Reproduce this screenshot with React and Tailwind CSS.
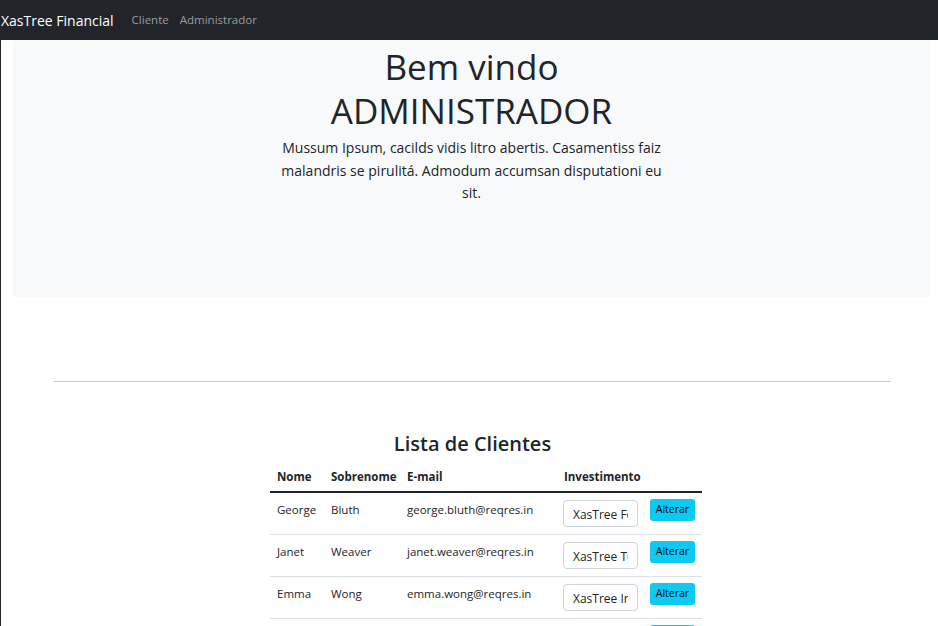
import React from "react";

const clientes = [
  { nome: "George", sobrenome: "Bluth", email: "george.bluth@reqres.in", investimento: "XasTree Fortune" },
  { nome: "Janet", sobrenome: "Weaver", email: "janet.weaver@reqres.in", investimento: "XasTree Tech" },
  { nome: "Emma", sobrenome: "Wong", email: "emma.wong@reqres.in", investimento: "XasTree Invest" },
  { nome: "Eve", sobrenome: "Holt", email: "eve.holt@reqres.in", investimento: "XasTree Fortune" },
];

const Navbar = () => (
  <nav className="h-10 bg-[#212529] flex items-center">
    <span className="text-[14px] text-white mr-[18px]">XasTree Financial</span>
    <a className="text-[11.5px] text-[#9a9c9e] mr-[11px]">Cliente</a>
    <a className="text-[11.5px] text-[#9a9c9e]">Administrador</a>
  </nav>
);

const App = () => {
  return (
    <div
      className="min-h-screen bg-white border-l border-[#212529] text-[#212529]"
      style={{ fontFamily: '"Open Sans", "Noto Sans", sans-serif' }}
    >
      <Navbar />

      <div className="ml-3 mr-2 bg-[#f8f9fa] h-[257px] flex flex-col items-center pt-[5px]">
        <h1 className="text-[35px] leading-[44px] text-center font-normal">
          Bem vindo
          <br />
          ADMINISTRADOR
        </h1>
        <p className="w-[400px] text-center text-[14px] leading-[22.5px] mt-[4px]">
          Mussum Ipsum, cacilds vidis litro abertis. Casamentiss faiz malandris se pirulitá. Admodum accumsan
          disputationi eu sit.
        </p>
      </div>

      <div className="pt-[84px] pl-[53px] pr-[47px]">
        <hr className="border-0 border-t border-[#c4c5c6]" />
      </div>

      <div className="pt-[48px]">
        <h3 className="text-[20px] font-semibold leading-[28px] text-center pl-[6px]">Lista de Clientes</h3>
        <table className="table-fixed w-[432px] ml-[269px] mt-[4px] text-[11.5px] border-collapse">
          <colgroup>
            <col className="w-[54px]" />
            <col className="w-[76px]" />
            <col className="w-[157px]" />
            <col className="w-[86px]" />
            <col className="w-[59px]" />
          </colgroup>
          <thead>
            <tr className="border-b-2 border-[#212529]">
              <th className="text-left font-bold px-[7px] py-[6px]">Nome</th>
              <th className="text-left font-bold px-[7px] py-[6px]">Sobrenome</th>
              <th className="text-left font-bold px-[7px] py-[6px]">E-mail</th>
              <th className="text-left font-bold px-[7px] py-[6px]">Investimento</th>
              <th className="px-[7px] py-[6px]"></th>
            </tr>
          </thead>
          <tbody>
            {clientes.map((c) => (
              <tr key={c.email} className="border-b border-[#dee2e6]">
                <td className="align-top px-[7px] py-[7px] leading-[19px]">{c.nome}</td>
                <td className="align-top px-[7px] py-[7px] leading-[19px]">{c.sobrenome}</td>
                <td className="align-top px-[7px] py-[7px] leading-[19px]">{c.email}</td>
                <td className="align-top pl-[6px] pr-[5px] py-[7px]">
                  <input
                    readOnly
                    value={c.investimento}
                    className="w-[75px] h-[27px] border border-[#ced4da] rounded-[4px] bg-white px-[9px] pt-[2px] text-[12px] text-[#212529] outline-none"
                  />
                </td>
                <td className="align-top px-[7px] pt-[6px]">
                  <button className="bg-[#0dcaf0] rounded-[3px] h-[22px] w-[45px] text-[10.5px] text-black">
                    Alterar
                  </button>
                </td>
              </tr>
            ))}
          </tbody>
        </table>
      </div>
    </div>
  );
};

export default App;
